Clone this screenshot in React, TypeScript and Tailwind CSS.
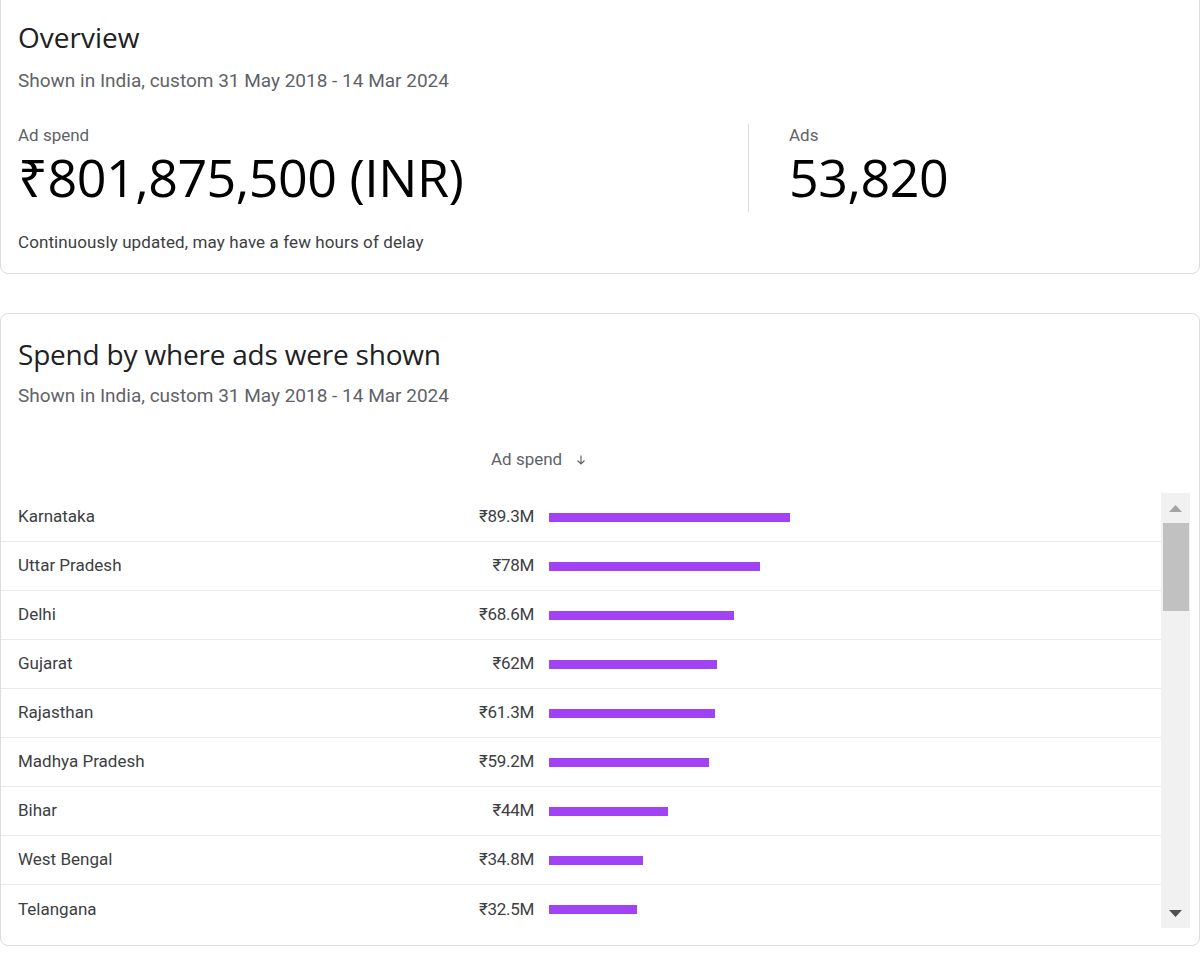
import React from "react";

const rows = [
  { name: "Karnataka", value: "₹89.3M", w: 241 },
  { name: "Uttar Pradesh", value: "₹78M", w: 211 },
  { name: "Delhi", value: "₹68.6M", w: 185 },
  { name: "Gujarat", value: "₹62M", w: 168 },
  { name: "Rajasthan", value: "₹61.3M", w: 166 },
  { name: "Madhya Pradesh", value: "₹59.2M", w: 160 },
  { name: "Bihar", value: "₹44M", w: 119 },
  { name: "West Bengal", value: "₹34.8M", w: 94 },
  { name: "Telangana", value: "₹32.5M", w: 88 },
];

export default function App() {
  return (
    <div className="w-[1200px] h-[955px] bg-white overflow-hidden font-['Roboto',sans-serif] text-[#202124]">
      {/* Overview card */}
      <div className="-mt-[12px] h-[286px] border border-[#dadce0] rounded-lg pl-[17px] pt-[30px]">
        <div className="text-[28px] leading-[36px] font-['Open_Sans',sans-serif] tracking-[0px]">Overview</div>
        <div className="mt-[14px] text-[19px] leading-[24px] text-[#5f6368]">Shown in India, custom 31 May 2018 - 14 Mar 2024</div>
        <div className="mt-[31px] flex">
          <div className="w-[731px] border-r border-[#dadce0] h-[88px] pt-[1px]">
            <div className="text-[17px] leading-[20px] text-[#5f6368]">Ad spend</div>
            <div className="mt-[6px] text-[52px] leading-[52px] font-['Open_Sans',sans-serif] tracking-[-0.5px] text-[#000]">₹801,875,500 (INR)</div>
          </div>
          <div className="pl-[40px] pt-[1px]">
            <div className="text-[17px] leading-[20px] text-[#5f6368]">Ads</div>
            <div className="mt-[6px] text-[52px] leading-[52px] font-['Open_Sans',sans-serif] tracking-[-0.5px] text-[#000]">53,820</div>
          </div>
        </div>
        <div className="mt-[20px] text-[17px] leading-[20px] text-[#3c4043] tracking-[0.1px]">Continuously updated, may have a few hours of delay</div>
      </div>

      {/* Spend card */}
      <div className="mt-[39px] h-[633px] border border-[#dadce0] rounded-lg pt-[22px]">
        <div className="pl-[17px] text-[28px] leading-[36px] font-['Open_Sans',sans-serif] tracking-[-0.2px]">Spend by where ads were shown</div>
        <div className="pl-[17px] mt-[12px] text-[19px] leading-[24px] text-[#5f6368]">Shown in India, custom 31 May 2018 - 14 Mar 2024</div>
        <div className="mt-[41px] h-[22px] flex items-center pl-[490px] text-[17px] text-[#5f6368]">
          <span>Ad spend</span>
          <svg className="ml-[13px]" width="12" height="12" viewBox="0 0 24 24" fill="none" stroke="#5f6368" strokeWidth="2.4">
            <path d="M12 3v17M5 13l7 7 7-7" />
          </svg>
        </div>
        <div className="mt-[22px] flex">
          <div className="w-[1160px]">
            {rows.map((r, i) => (
              <div
                key={r.name}
                className={`h-[49px] flex items-center ${i < rows.length - 1 ? "border-b border-[#e8eaed]" : ""}`}
              >
                <div className="w-[438px] pl-[17px] text-[17px] text-[#3c4043]">{r.name}</div>
                <div className="w-[95px] text-right text-[17px] text-[#3c4043] tracking-[-0.3px]">{r.value}</div>
                <div className="ml-[15px] h-[9px] bg-[#a142f4]" style={{ width: r.w }} />
              </div>
            ))}
          </div>
          <div className="w-[29px] h-[435px] bg-[#f1f1f1] flex flex-col items-center">
            <div className="h-[30px] flex items-center justify-center">
              <svg width="13" height="7" viewBox="0 0 13 7"><path d="M6.5 0L13 7H0z" fill="#a3a3a3" /></svg>
            </div>
            <div className="w-[26px] h-[88px] bg-[#c1c1c1]" />
            <div className="flex-1" />
            <div className="h-[30px] flex items-center justify-center">
              <svg width="13" height="7" viewBox="0 0 13 7"><path d="M0 0H13L6.5 7z" fill="#505050" /></svg>
            </div>
          </div>
        </div>
      </div>
    </div>
  );
}
